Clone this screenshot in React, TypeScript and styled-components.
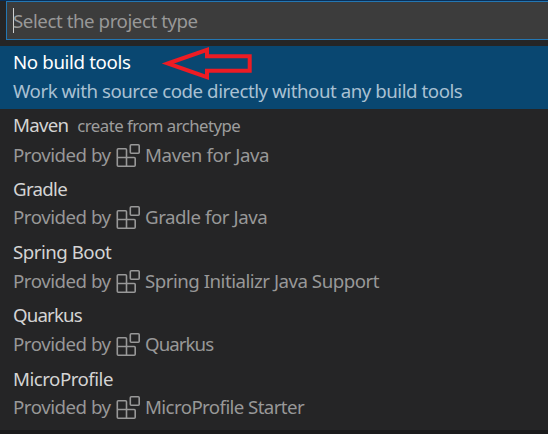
import React from 'react';
import styled, { createGlobalStyle } from 'styled-components';

const GlobalStyle = createGlobalStyle`
  * { box-sizing: border-box; }
  body { margin: 0; background: #252526; }
`;

const QuickPick = styled.main`
  display: flex;
  flex-direction: column;
  width: 548px;
  height: 434px;
  overflow: hidden;
  background: #252526;
  border-bottom: 4px solid #1b1b1c;
  font-family: 'Noto Sans', 'Open Sans', sans-serif;
  font-size: 18.7px;
  line-height: 29px;
  white-space: nowrap;
`;

const TopEdge = styled.div`
  flex: none;
  height: 1px;
  background: #08305a;
`;

const InputBox = styled.div`
  display: flex;
  align-items: center;
  flex: none;
  height: 39px;
  margin: 0 0 6px 6px;
  padding-left: 6px;
  border: 1px solid #2477b3;
  border-right: 0;
  background: #3c3c3c;
  color: #989898;
`;

const Caret = styled.span`
  width: 1px;
  height: 25px;
  margin: -1px -1px 0 0;
  background: #d0d0d0;
`;

const Row = styled.div<{ $selected?: boolean; $height: number }>`
  display: flex;
  flex-direction: column;
  flex: none;
  height: ${(p) => p.$height}px;
  padding: 1px 0 0 13px;
  background: ${(p) => (p.$selected ? '#094771' : 'transparent')};
  color: ${(p) => (p.$selected ? '#ffffff' : '#d4d4d4')};
`;

const Line = styled.div<{ $offset?: number }>`
  display: flex;
  align-items: baseline;
  height: 29px;
  margin-top: ${(p) => p.$offset ?? 0}px;
`;

const Text = styled.span<{ $spacing: number }>`
  letter-spacing: ${(p) => p.$spacing}px;
`;

const Hint = styled(Text)`
  margin-left: 9px;
  font-size: 16.8px;
  color: #9d9d9d;
`;

const Detail = styled(Line)<{ $selected?: boolean }>`
  color: ${(p) => (p.$selected ? '#a9c1d3' : '#989898')};
`;

const Provider = styled.span`
  width: 103px;
  letter-spacing: -0.48px;
`;

const ExtensionSvg = styled.svg`
  flex: none;
  align-self: center;
  width: 24px;
  height: 25px;
  margin: 2px 5px 0 0;
`;

const Arrow = styled.svg`
  position: absolute;
  left: 158px;
  top: 44px;
  width: 98px;
  height: 40px;
`;

const ExtensionIcon = () => (
  <ExtensionSvg viewBox="0 0 24 25" fill="none" stroke="#989898" strokeWidth="1.6">
    <path d="M2.3 5.8H9.5q1 0 1 1V14.5H18.2q1 0 1 1V22.2q0 1-1 1H2.3q-1 0-1-1V6.8q0-1 1-1zM1.3 14.5h9.2v8.7" />
    <rect x="14.3" y="1.8" width="8.9" height="8.5" rx="1" />
  </ExtensionSvg>
);

type Project = {
  name: string;
  spacing: number;
  height: number;
  hint?: string;
  extension: string;
  detailSpacing: number;
  offset?: number;
};

const projects: Project[] = [
  { name: 'Maven', spacing: -0.75, height: 64, hint: 'create from archetype', extension: 'Maven for Java', detailSpacing: -0.4, offset: 1 },
  { name: 'Gradle', spacing: -0.7, height: 63, extension: 'Gradle for Java', detailSpacing: -0.45, offset: -1 },
  { name: 'Spring Boot', spacing: -0.5, height: 63, extension: 'Spring Initializr Java Support', detailSpacing: -0.5 },
  { name: 'Quarkus', spacing: -0.85, height: 64, extension: 'Quarkus', detailSpacing: -0.95 },
  { name: 'MicroProfile', spacing: -0.5, height: 63, extension: 'MicroProfile Starter', detailSpacing: -0.6, offset: -1 },
];

export default function App() {
  return (
    <>
      <GlobalStyle />
      <QuickPick>
        <TopEdge />
        <InputBox>
          <Caret />
          <Text $spacing={-0.44}>Select the project type</Text>
        </InputBox>
        <Row $selected $height={63}>
          <Line><Text $spacing={-0.36}>No build tools</Text></Line>
          <Detail $selected>
            <Text $spacing={-0.46}>Work with source code directly without any build tools</Text>
          </Detail>
        </Row>
        {projects.map((p) => (
          <Row key={p.name} $height={p.height}>
            <Line>
              <Text $spacing={p.spacing}>{p.name}</Text>
              {p.hint && <Hint $spacing={-0.54}>{p.hint}</Hint>}
            </Line>
            <Detail $offset={p.offset}>
              <Provider>Provided by</Provider>
              <ExtensionIcon />
              <Text $spacing={p.detailSpacing}>{p.extension}</Text>
            </Detail>
          </Row>
        ))}
      </QuickPick>
      <Arrow viewBox="0 0 98 40" fill="none" stroke="#ed1c24" strokeWidth="4">
        <path d="M9.8 19.5 49 5.8v6.5H91.7v14.4H49v6.5z" />
      </Arrow>
    </>
  );
}
